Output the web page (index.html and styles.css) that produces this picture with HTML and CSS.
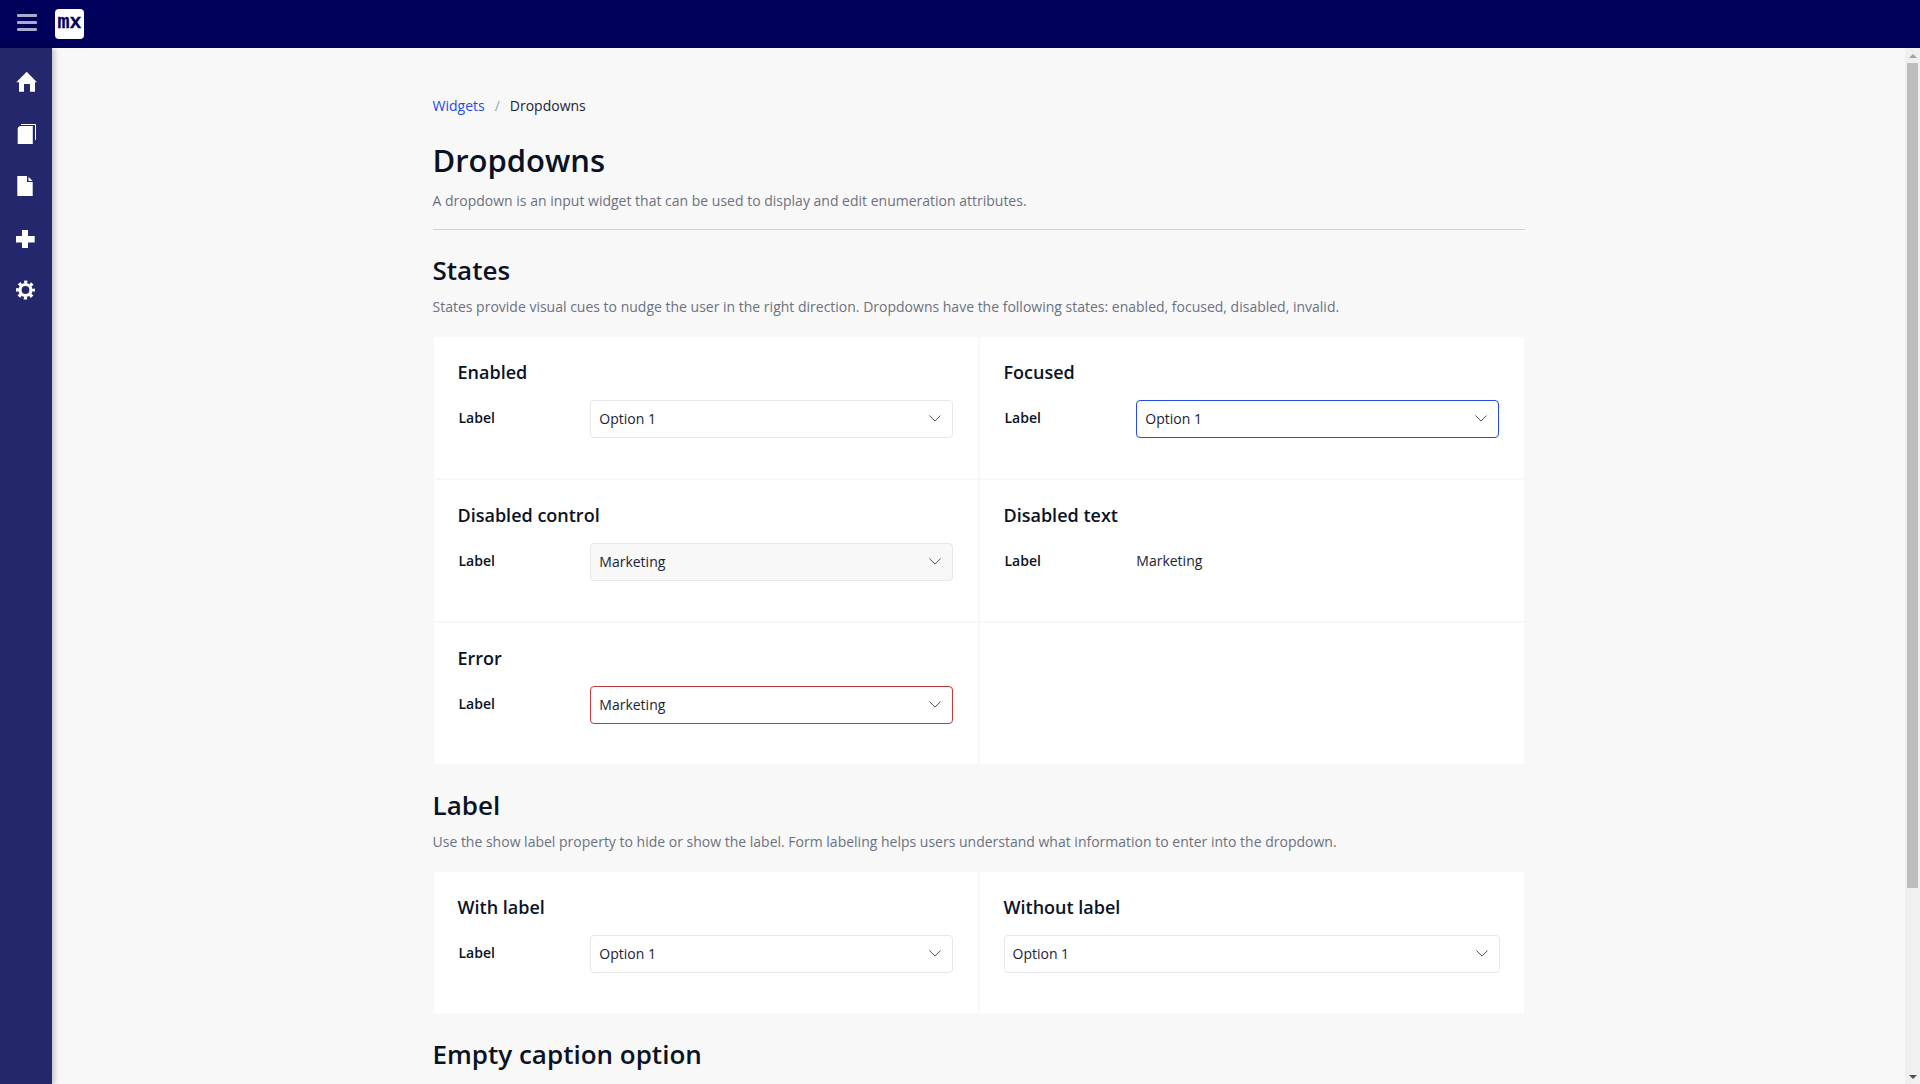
FILE: index.html
```html
<!DOCTYPE html>
<html lang="en">
<head>
<meta charset="utf-8">
<title>Dropdowns</title>
<link rel="stylesheet" href="styles.css">
</head>
<body>
<header class="topbar">
  <button class="menu-btn" aria-label="Menu"><span></span><span></span><span></span></button>
  <div class="logo">mx</div>
</header>
<div class="shell">
  <nav class="sidebar">
    <a class="nav-item"><svg width="24" height="24" viewBox="0 0 24 24"><path d="M12.7 1.7 L23 12.3 H21 V21.7 H16 V14 H10 V21.7 H5 V12.3 H2.3 Z" fill="#fff"/></svg></a>
    <a class="nav-item"><svg width="24" height="24" viewBox="0 0 24 24"><path d="M6.5 4 H18.8 V22 H3.7 V7 Q3.7 4.5 6.5 4 Z" fill="#fff"/><path d="M7 2.5 H21.5 V18" fill="none" stroke="#fff" stroke-width="1"/></svg></a>
    <a class="nav-item"><svg width="24" height="24" viewBox="0 0 24 24"><path d="M3.3 2 H13 V8 H18.7 V22 H3.3 Z M14.5 2.7 L18.7 7 H14.5 Z" fill="#fff"/></svg></a>
    <a class="nav-item"><svg width="24" height="24" viewBox="0 0 24 24"><path d="M8 4 H14 V10 H20.7 V16.5 H14 V22 H8 V16.5 H2 V10 H8 Z" fill="#fff"/></svg></a>
    <a class="nav-item"><svg width="24" height="24" viewBox="0 0 24 24"><g fill="none" stroke="#fff"><circle cx="11.5" cy="12" r="5.5" stroke-width="3.2"/><circle cx="11.5" cy="12" r="8" stroke-width="3" stroke-dasharray="3.2 3.08" stroke-dashoffset="1.6"/></g></svg></a>
  </nav>
  <main class="main">
    <div class="page">
      <div class="crumbs"><a class="crumb-link">Widgets</a><span class="crumb-sep">/</span><span>Dropdowns</span></div>
      <h1>Dropdowns</h1>
      <p class="lead">A dropdown is an input widget that can be used to display and edit enumeration attributes.</p>
      <hr class="rule">

      <h2>States</h2>
      <p class="lead">States provide visual cues to nudge the user in the right direction. Dropdowns have the following states: enabled, focused, disabled, invalid.</p>
      <section class="card">
        <div class="cell">
          <h3>Enabled</h3>
          <div class="field"><label>Label</label><div class="select"><span>Option 1</span><svg class="chev" width="12" height="7" viewBox="0 0 12 7"><path d="M.4 .5 L6 6.1 L11.6 .5" fill="none" stroke="#4a5060"/></svg></div></div>
        </div>
        <div class="cell">
          <h3>Focused</h3>
          <div class="field"><label>Label</label><div class="select focused"><span>Option 1</span><svg class="chev" width="12" height="7" viewBox="0 0 12 7"><path d="M.4 .5 L6 6.1 L11.6 .5" fill="none" stroke="#4a5060"/></svg></div></div>
        </div>
        <div class="cell">
          <h3>Disabled control</h3>
          <div class="field"><label>Label</label><div class="select disabled"><span>Marketing</span><svg class="chev" width="12" height="7" viewBox="0 0 12 7"><path d="M.4 .5 L6 6.1 L11.6 .5" fill="none" stroke="#4a5060"/></svg></div></div>
        </div>
        <div class="cell">
          <h3>Disabled text</h3>
          <div class="field"><label>Label</label><div class="static">Marketing</div></div>
        </div>
        <div class="cell">
          <h3>Error</h3>
          <div class="field"><label>Label</label><div class="select error"><span>Marketing</span><svg class="chev" width="12" height="7" viewBox="0 0 12 7"><path d="M.4 .5 L6 6.1 L11.6 .5" fill="none" stroke="#4a5060"/></svg></div></div>
        </div>
        <div class="cell"></div>
      </section>

      <h2>Label</h2>
      <p class="lead">Use the show label property to hide or show the label. Form labeling helps users understand what information to enter into the dropdown.</p>
      <section class="card">
        <div class="cell">
          <h3>With label</h3>
          <div class="field"><label>Label</label><div class="select"><span>Option 1</span><svg class="chev" width="12" height="7" viewBox="0 0 12 7"><path d="M.4 .5 L6 6.1 L11.6 .5" fill="none" stroke="#4a5060"/></svg></div></div>
        </div>
        <div class="cell">
          <h3>Without label</h3>
          <div class="field field-bare"><div class="select"><span>Option 1</span><svg class="chev" width="12" height="7" viewBox="0 0 12 7"><path d="M.4 .5 L6 6.1 L11.6 .5" fill="none" stroke="#4a5060"/></svg></div></div>
        </div>
      </section>

      <h2>Empty caption option</h2>
    </div>
  </main>
  <aside class="scrollbar" aria-hidden="true">
    <div class="arrow arrow-up"></div>
    <div class="track"><div class="thumb"></div></div>
    <div class="arrow arrow-down"></div>
  </aside>
</div>
</body>
</html>
```
FILE: styles.css
```css
* { box-sizing: border-box; }
html, body { height: 100%; }
body {
  margin: 0;
  display: flex;
  flex-direction: column;
  overflow: hidden;
  font-family: "Open Sans", sans-serif;
  font-size: 14px;
  line-height: 20px;
  color: #0a1325;
  background: #f8f8f8;
}
.topbar {
  flex: 0 0 48px;
  height: 48px;
  display: flex;
  align-items: center;
  background: #00005a;
}
.menu-btn {
  width: 55px;
  height: 48px;
  padding: 0 0 3px 17px;
  margin: 0;
  border: 0;
  background: none;
  display: flex;
  flex-direction: column;
  justify-content: center;
  gap: 4px;
}
.menu-btn span { display: block; width: 20px; height: 3px; border-radius: 1px; background: #aaaacc; }
.logo {
  width: 29px;
  height: 30px;
  border-radius: 4px;
  background: #fff;
  color: #00005a;
  font-family: "Liberation Mono", monospace;
  font-weight: 700;
  font-size: 20px;
  -webkit-text-stroke: .3px #00005a;
  line-height: 27px;
  text-align: center;
}
.shell { flex: 1; min-height: 0; display: flex; }
.sidebar {
  flex: 0 0 52px;
  background: #24276c;
  box-shadow: 2px 0 6px rgba(0,0,0,.25);
  position: relative;
  display: flex;
  flex-direction: column;
  padding-top: 8px;
}
.nav-item { height: 52px; display: flex; align-items: center; padding-left: 14px; }
.main { flex: 1; overflow: hidden; min-width: 0; }
.page { width: 1092px; margin: 0 auto; padding-top: 48px; }
.crumbs { display: flex; height: 20px; color: #1b2333; }
.crumb-link { color: #264ae5; }
.crumb-sep { color: #9aa0aa; margin: 0 10px 0 10px; }
h1 { margin: 24px 0 11px; font-size: 31px; line-height: 40px; font-weight: 600; }
h2 { margin: 22px 0 0; font-size: 26px; line-height: 34px; font-weight: 600; }
.rule + h2 { margin-top: 23px; }
h3 { margin: 0 0 16px; font-size: 18px; line-height: 24px; font-weight: 600; }
.lead { margin: 10px 0 0; color: #6c717e; line-height: 20px; }
.rule { margin: 18px 0 0; border: 0; border-top: 1px solid #ced0d3; }
.card {
  margin-top: 20px;
  display: grid;
  grid-template-columns: 1fr 1fr;
  background: #fff;
}
.cell {
  min-height: 143px;
  padding: 23px 25px 0 24px;
  border-style: solid;
  border-color: #f8f8f8;
  border-width: 0 1px 2px;
}
.field { display: flex; align-items: flex-start; }
.field-bare { margin-right: -1px; }
.field label { flex: 0 0 132.8px; padding: 8px 0 0 1px; font-weight: 600; }
.select {
  flex: 1;
  height: 38px;
  padding: 0 8px;
  display: flex;
  align-items: center;
  justify-content: space-between;
  border: 1px solid #e7e7e9;
  border-radius: 4px;
  background: #fff;
  color: #1b2333;
}
.chev { margin-right: 3px; margin-top: -2px; }
.focused { border-color: #264ae5; }
.disabled { background: #f8f8f8; }
.error { border-color: #bf3a40; }
.static { padding-top: 8px; color: #1b2333; }
.scrollbar {
  flex: 0 0 15px;
  display: flex;
  flex-direction: column;
  background: #f0f0f0;
}
.arrow { flex: 0 0 15px; display: flex; align-items: center; justify-content: center; }
.arrow::before {
  content: "";
  border-left: 4px solid transparent;
  border-right: 4px solid transparent;
}
.arrow-up::before { border-bottom: 4px solid #a3a3a3; }
.arrow-down::before { border-top: 4px solid #505050; }
.track { flex: 1; padding: 0 2px; }
.thumb { height: 825px; background: #bdbdbd; }
```
